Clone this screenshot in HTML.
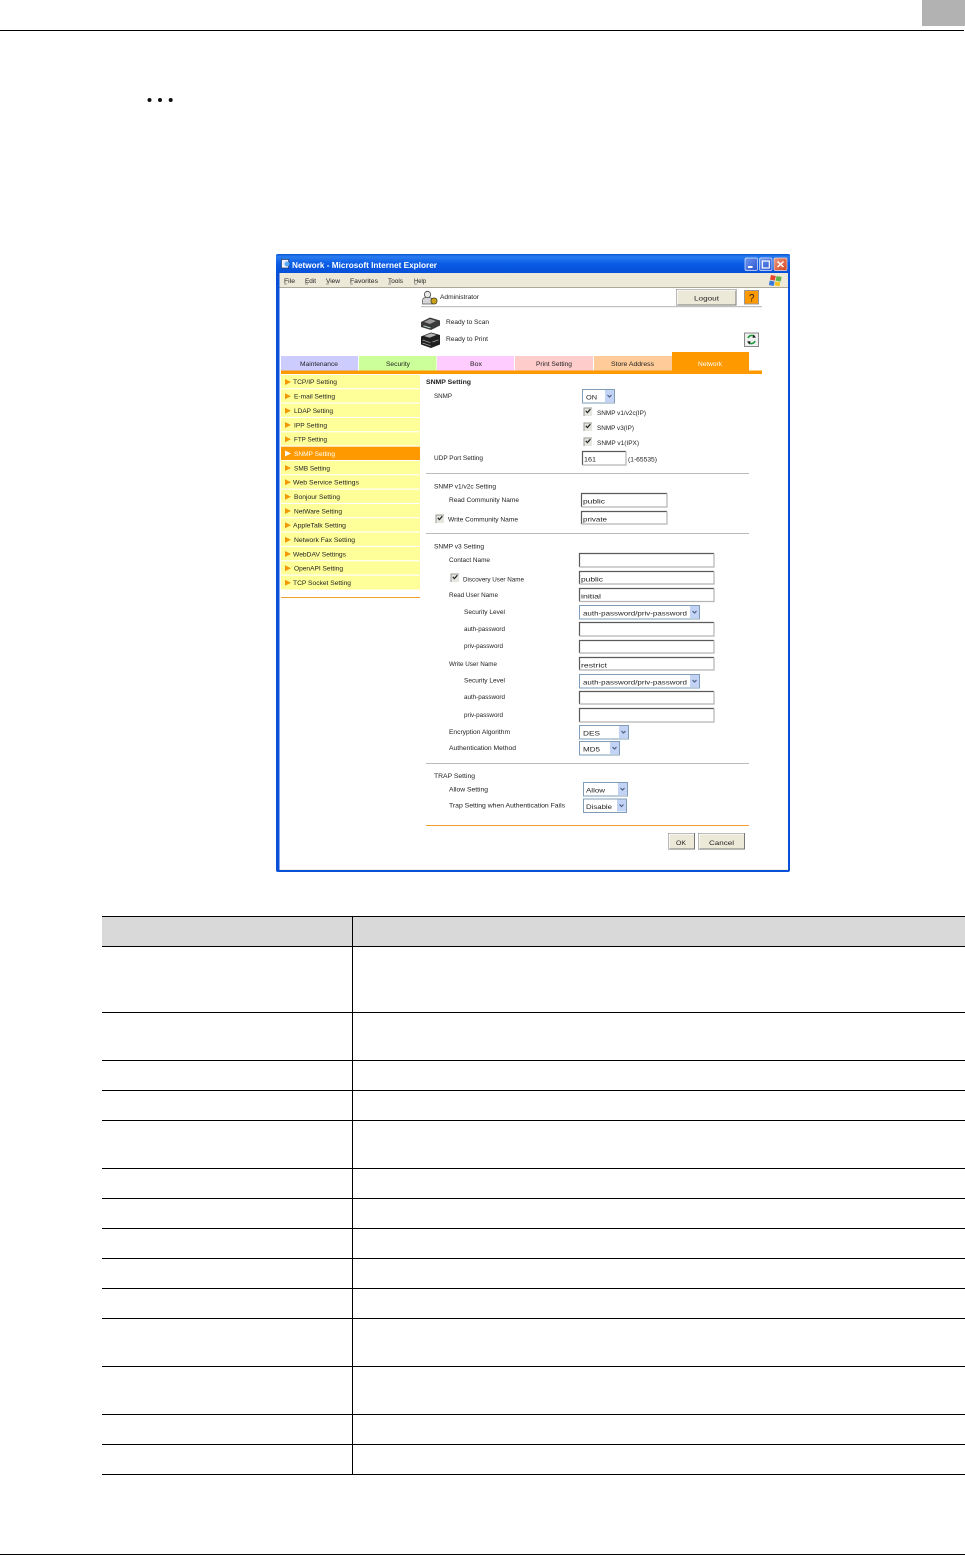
<!DOCTYPE html>
<html><head><meta charset="utf-8"><title>SNMP Setting</title>
<style>
html,body{margin:0;padding:0;background:#fff}
svg{display:block;position:absolute;left:0;top:0}
text{font-family:"Liberation Sans",sans-serif;font-size:6.2px;fill:#222}
.t{filter:blur(.28px)}
.m{font-size:8px;fill:#333}
.f{font-size:9px;fill:#333}
.w{fill:#fff}
.i{fill:none;stroke:#5a5a5a;stroke-width:1.2}
.j{fill:none;stroke:#b5b5b5;stroke-width:1.2}
</style></head><body>
<svg width="965" height="1555" viewBox="0 0 965 1555" xmlns="http://www.w3.org/2000/svg">
<defs>
<linearGradient id="tb" x1="0" y1="0" x2="0" y2="1"><stop offset="0" stop-color="#0a58d8"/><stop offset=".15" stop-color="#2a7cf0"/><stop offset=".5" stop-color="#0a5ce6"/><stop offset="1" stop-color="#0650d8"/></linearGradient>
<linearGradient id="bb" x1="0" y1="0" x2="1" y2="1"><stop offset="0" stop-color="#6f96ee"/><stop offset="1" stop-color="#2a55d0"/></linearGradient>
<linearGradient id="rb" x1="0" y1="0" x2="1" y2="1"><stop offset="0" stop-color="#ec9a80"/><stop offset="1" stop-color="#d5431f"/></linearGradient>
<g id="ar"><rect width="9" height="12" fill="#c3d3f5"/><path d="M2.500 5l2 2 2-2" fill="none" stroke="#4d6185" stroke-width="1.200"/></g>
<g id="ck"><rect width="8" height="8" fill="#e6e6e0"/><path d="M0 8V0H8" fill="none" stroke="#9a9a94" stroke-width="1"/><path d="M1.800 2.800l1.600 1.800 3-3.400" fill="none" stroke="#222" stroke-width="1.200"/></g>
<path id="tri" d="M0 0l6 3-6 3z" fill="#f29a05"/>
</defs>

<!-- page chrome -->
<rect x="922" y="0" width="43" height="26" fill="#b2b2b2"/>
<rect x="0" y="30" width="964" height="1" fill="#000"/>
<circle cx="149.500" cy="100" r="2" fill="#111"/><circle cx="160" cy="100" r="2" fill="#111"/><circle cx="170.700" cy="100" r="2" fill="#111"/>
<rect x="0" y="1554" width="965" height="1" fill="#000"/>

<!-- window -->
<rect x="276" y="254" width="514" height="618" rx="2" fill="#0a4fd8"/>
<rect x="276" y="254" width="514" height="19" rx="2" fill="url(#tb)"/>
<rect x="279.500" y="273" width="508.500" height="597" fill="#fff"/>
<rect x="279.500" y="273" width="508.500" height="14" fill="#ece9d8"/>
<rect x="279.500" y="287" width="508.500" height="1" fill="#aca899"/>
<rect x="279.500" y="869" width="508.500" height="1" fill="#f1efe2"/>
<!-- title buttons -->
<rect x="745" y="258" width="12.500" height="12.500" rx="1.500" fill="url(#bb)" stroke="#dfe8fb" stroke-width=".7"/>
<rect x="748" y="266" width="4.500" height="2" fill="#fff"/>
<rect x="759.500" y="258" width="12.500" height="12.500" rx="1.500" fill="url(#bb)" stroke="#dfe8fb" stroke-width=".7"/>
<rect x="762.300" y="261" width="7" height="7" fill="none" stroke="#fff" stroke-width="1.200"/>
<rect x="774" y="258" width="13" height="12.500" rx="1.500" fill="url(#rb)" stroke="#f4dcd4" stroke-width=".7"/>
<path d="M777.500 261.500l6 5.500m0-5.500l-6 5.500" stroke="#fff" stroke-width="1.500"/>
<!-- IE icon -->
<rect x="281.500" y="259.500" width="7" height="8.500" fill="#eef" stroke="#234" stroke-width=".6"/>
<circle cx="287" cy="264" r="2.500" fill="#5fa9f0"/>
<!-- XP flag -->
<path d="M771 275l4.800 1-1 4.600-4.800-1z" fill="#e8452a"/><path d="M776.600 276l5 1-1 4.600-5-1z" fill="#5db44a"/>
<path d="M769.800 280.500l4.800 1-1 4.500-4.800-1z" fill="#3b78dc"/><path d="M775.400 281.500l5 1-1 3.800-4.900-.8z" fill="#f5c31c"/>

<!-- tabs -->
<rect x="281" y="356" width="77" height="14.500" fill="#ccccff"/>
<rect x="359" y="356" width="77.500" height="14.500" fill="#ccff99"/>
<rect x="437" y="356" width="77" height="14.500" fill="#ffccff"/>
<rect x="515" y="356" width="78" height="14.500" fill="#ffcccc"/>
<rect x="594" y="356" width="78" height="14.500" fill="#ffcc99"/>
<rect x="672" y="352" width="77" height="19" fill="#ff9900"/>
<rect x="281" y="370.500" width="481" height="3.500" fill="#ff9900"/>

<!-- admin rule & buttons -->
<rect x="421" y="306" width="341" height="1.200" fill="#c0c0c0"/>
<rect x="676.500" y="289.500" width="59.500" height="15.500" fill="#ece9d8" stroke="#777" stroke-width="1"/>
<path d="M677 305V290H736" fill="none" stroke="#fff" stroke-width="1"/>
<rect x="744.500" y="290.500" width="14" height="13.500" fill="#ff9900" stroke="#999" stroke-width="1"/>
<rect x="744.500" y="333" width="14" height="13.500" fill="#f0f0f0" stroke="#888" stroke-width="1"/>
<path d="M748 338a4 4 0 0 1 6.500-1.500" fill="none" stroke="#1f9a3c" stroke-width="1.600"/><path d="M755 341a4 4 0 0 1-6.500 1.500" fill="none" stroke="#1f9a3c" stroke-width="1.600"/>
<path d="M753.500 334.500l2.500 3-3.500.4zM749.500 344.500l-2.500-3 3.500-.4z" fill="#222"/>

<!-- admin icon -->
<circle cx="427.500" cy="294.500" r="3.200" fill="#e8e8e8" stroke="#444" stroke-width=".8"/>
<path d="M422.500 304v-3.500q0-2.500 3-3h4q3 .5 3 3.500v3z" fill="#d5d5d5" stroke="#555" stroke-width=".7"/>
<rect x="431" y="298" width="6" height="6" rx="2.500" fill="#caa21a" stroke="#332" stroke-width=".7"/>
<!-- scanner icon -->
<path d="M421 322l9-4.500 10 3v5l-9 4.500-10-3z" fill="#3a3a3a"/>
<path d="M424 322l6-3 6 2-6 3z" fill="#9a9a9a"/>
<path d="M423 326l7 2.200 1-.5-7-2.200z" fill="#dfe"/>
<!-- printer icon -->
<path d="M421 336.500l10-4 9 2.500v9.500l-9 3.500-10-3.500z" fill="#1f1f1f"/>
<path d="M424 336l7-2.700 5.500 1.700-7 2.800z" fill="#b5b5b5"/>
<path d="M422.500 340l8 2.700M422.500 343l8 2.700M432.500 342l6-2.200" stroke="#aaa" stroke-width=".7"/>

<!-- sidebar -->
<g fill="#ffff99">
<rect x="281" y="375" width="139" height="13.200"/><rect x="281" y="389.300" width="139" height="13.200"/><rect x="281" y="403.700" width="139" height="13.200"/><rect x="281" y="418" width="139" height="13.200"/><rect x="281" y="432.300" width="139" height="13.200"/>
<rect x="281" y="461" width="139" height="13.200"/><rect x="281" y="475.300" width="139" height="13.200"/><rect x="281" y="489.700" width="139" height="13.200"/><rect x="281" y="504" width="139" height="13.200"/><rect x="281" y="518.300" width="139" height="13.200"/><rect x="281" y="532.700" width="139" height="13.200"/><rect x="281" y="547" width="139" height="13.200"/><rect x="281" y="561.300" width="139" height="13.200"/><rect x="281" y="575.700" width="139" height="13.800"/>
</g>
<rect x="281" y="446.700" width="139" height="13.300" fill="#ff9900"/>
<rect x="281" y="597" width="139" height="1" fill="#f0a030"/>
<use href="#tri" x="285" y="379"/><use href="#tri" x="285" y="393.300"/><use href="#tri" x="285" y="407.700"/><use href="#tri" x="285" y="422"/><use href="#tri" x="285" y="436.300"/>
<path d="M285 450.500l6 3-6 3z" fill="#fff"/>
<use href="#tri" x="285" y="465"/><use href="#tri" x="285" y="479.300"/><use href="#tri" x="285" y="493.700"/><use href="#tri" x="285" y="508"/><use href="#tri" x="285" y="522.300"/><use href="#tri" x="285" y="536.700"/><use href="#tri" x="285" y="551"/><use href="#tri" x="285" y="565.300"/><use href="#tri" x="285" y="579.700"/>

<!-- separators -->
<rect x="426" y="473" width="323" height="1" fill="#bbb"/>
<rect x="426" y="533" width="323" height="1" fill="#bbb"/>
<rect x="426" y="763" width="323" height="1" fill="#bbb"/>
<rect x="426" y="825" width="323" height="1" fill="#f0a030"/>

<!-- selects -->
<g fill="#fff" stroke="#7f9db9" stroke-width="1">
<rect x="582.500" y="389.500" width="32" height="13.500"/>
<rect x="579.500" y="605.500" width="120" height="13.500"/>
<rect x="579.500" y="674.500" width="120" height="13.500"/>
<rect x="579.500" y="725.500" width="49" height="13.500"/>
<rect x="579.500" y="741.500" width="40" height="13.500"/>
<rect x="583.500" y="782.500" width="44" height="13.500"/>
<rect x="583.500" y="799" width="43" height="13.500"/>
</g>
<use href="#ar" x="605" y="390"/><use href="#ar" x="690" y="606"/><use href="#ar" x="690" y="675"/><use href="#ar" x="619" y="726"/><use href="#ar" x="610" y="742"/><use href="#ar" x="618" y="783"/><use href="#ar" x="617" y="799.500"/>

<!-- inputs -->
<path class="i" d="M582.500 465V451.500H626"/><path class="j" d="M626 451.500V465H582.500"/>
<path class="i" d="M581.500 507V493.500H667"/><path class="j" d="M667 493.500V507H581.500"/>
<path class="i" d="M581.500 524V511.500H667"/><path class="j" d="M667 511.500V524H581.500"/>
<path class="i" d="M579.500 567V553.500H714"/><path class="j" d="M714 553.500V567H579.500"/>
<path class="i" d="M579.500 584V571.500H714"/><path class="j" d="M714 571.500V584H579.500"/>
<path class="i" d="M579.500 601.500V588.500H714"/><path class="j" d="M714 588.500V601.500H579.500"/>
<path class="i" d="M579.500 636V622.500H714"/><path class="j" d="M714 622.500V636H579.500"/>
<path class="i" d="M579.500 653V640.500H714"/><path class="j" d="M714 640.500V653H579.500"/>
<path class="i" d="M579.500 670V657.500H714"/><path class="j" d="M714 657.500V670H579.500"/>
<path class="i" d="M579.500 704V691.500H714"/><path class="j" d="M714 691.500V704H579.500"/>
<path class="i" d="M579.500 722V708.500H714"/><path class="j" d="M714 708.500V722H579.500"/>

<!-- checkboxes -->
<use href="#ck" x="584" y="408"/><use href="#ck" x="584" y="423"/><use href="#ck" x="584" y="438"/>
<use href="#ck" x="436" y="515"/><use href="#ck" x="451" y="574"/>

<!-- OK / Cancel -->
<rect x="668.500" y="833.500" width="26" height="15.500" fill="#ece9d8" stroke="#777" stroke-width="1"/>
<path d="M669 849V834H694" fill="none" stroke="#fff"/>
<rect x="698.500" y="833.500" width="46" height="15.500" fill="#ece9d8" stroke="#777" stroke-width="1"/>
<path d="M699 849V834H744" fill="none" stroke="#fff"/>

<!-- all screenshot text -->
<g class="t">
<text class="w" x="292" y="268" textLength="145" lengthAdjust="spacingAndGlyphs" style="font-size:8px;font-weight:bold">Network - Microsoft Internet Explorer</text>
<g class="m">
<text x="284" y="283" textLength="11" lengthAdjust="spacingAndGlyphs">File</text>
<text x="305" y="283" textLength="11" lengthAdjust="spacingAndGlyphs">Edit</text>
<text x="326" y="283" textLength="14" lengthAdjust="spacingAndGlyphs">View</text>
<text x="350" y="283" textLength="28" lengthAdjust="spacingAndGlyphs">Favorites</text>
<text x="388" y="283" textLength="15" lengthAdjust="spacingAndGlyphs">Tools</text>
<text x="414" y="283" textLength="12" lengthAdjust="spacingAndGlyphs">Help</text>
</g>
<path d="M284 284h3M305 284h3M326 284h3M350 284h3M388 284h3M414 284h3" stroke="#444" stroke-width=".5"/>
<text x="440" y="299" textLength="39" lengthAdjust="spacingAndGlyphs">Administrator</text>
<text x="446" y="324" textLength="43" lengthAdjust="spacingAndGlyphs">Ready to Scan</text>
<text x="446" y="341" textLength="42" lengthAdjust="spacingAndGlyphs">Ready to Print</text>
<text x="300" y="366" textLength="38" lengthAdjust="spacingAndGlyphs">Maintenance</text>
<text x="386" y="366" textLength="24" lengthAdjust="spacingAndGlyphs">Security</text>
<text x="470" y="366" textLength="12" lengthAdjust="spacingAndGlyphs">Box</text>
<text x="536" y="366" textLength="36" lengthAdjust="spacingAndGlyphs">Print Setting</text>
<text x="611" y="366" textLength="43" lengthAdjust="spacingAndGlyphs">Store Address</text>
<text class="w" x="698" y="366" textLength="24" lengthAdjust="spacingAndGlyphs">Network</text>

<text x="293" y="384" textLength="44" lengthAdjust="spacingAndGlyphs">TCP/IP Setting</text>
<text x="294" y="398.500" textLength="41" lengthAdjust="spacingAndGlyphs">E-mail Setting</text>
<text x="294" y="413" textLength="39" lengthAdjust="spacingAndGlyphs">LDAP Setting</text>
<text x="294" y="427.300" textLength="33" lengthAdjust="spacingAndGlyphs">IPP Setting</text>
<text x="294" y="441.700" textLength="33" lengthAdjust="spacingAndGlyphs">FTP Setting</text>
<text class="w" x="294" y="456" textLength="41" lengthAdjust="spacingAndGlyphs">SNMP Setting</text>
<text x="294" y="470.300" textLength="36" lengthAdjust="spacingAndGlyphs">SMB Setting</text>
<text x="293" y="484.700" textLength="66" lengthAdjust="spacingAndGlyphs">Web Service Settings</text>
<text x="294" y="499" textLength="46" lengthAdjust="spacingAndGlyphs">Bonjour Setting</text>
<text x="294" y="513.300" textLength="48" lengthAdjust="spacingAndGlyphs">NetWare Setting</text>
<text x="293" y="527.700" textLength="53" lengthAdjust="spacingAndGlyphs">AppleTalk Setting</text>
<text x="294" y="542" textLength="61" lengthAdjust="spacingAndGlyphs">Network Fax Setting</text>
<text x="293" y="556.300" textLength="53" lengthAdjust="spacingAndGlyphs">WebDAV Settings</text>
<text x="294" y="570.700" textLength="49" lengthAdjust="spacingAndGlyphs">OpenAPI Setting</text>
<text x="293" y="585" textLength="58" lengthAdjust="spacingAndGlyphs">TCP Socket Setting</text>

<text x="426" y="384" textLength="45" lengthAdjust="spacingAndGlyphs" style="font-weight:bold">SNMP Setting</text>
<text x="434" y="398" textLength="18" lengthAdjust="spacingAndGlyphs">SNMP</text>
<text x="597" y="415" textLength="49" lengthAdjust="spacingAndGlyphs">SNMP v1/v2c(IP)</text>
<text x="597" y="430" textLength="37" lengthAdjust="spacingAndGlyphs">SNMP v3(IP)</text>
<text x="597" y="445" textLength="42" lengthAdjust="spacingAndGlyphs">SNMP v1(IPX)</text>
<text x="434" y="460" textLength="49" lengthAdjust="spacingAndGlyphs">UDP Port Setting</text>
<text x="628" y="461.500" textLength="29" lengthAdjust="spacingAndGlyphs">(1-65535)</text>
<text x="434" y="488.500" textLength="62" lengthAdjust="spacingAndGlyphs">SNMP v1/v2c Setting</text>
<text x="449" y="502" textLength="70" lengthAdjust="spacingAndGlyphs">Read Community Name</text>
<text x="448" y="521.500" textLength="70" lengthAdjust="spacingAndGlyphs">Write Community Name</text>
<text x="434" y="548.500" textLength="50" lengthAdjust="spacingAndGlyphs">SNMP v3 Setting</text>
<text x="449" y="562" textLength="41" lengthAdjust="spacingAndGlyphs">Contact Name</text>
<text x="463" y="581.500" textLength="61" lengthAdjust="spacingAndGlyphs">Discovery User Name</text>
<text x="449" y="597" textLength="49" lengthAdjust="spacingAndGlyphs">Read User Name</text>
<text x="464" y="614" textLength="41" lengthAdjust="spacingAndGlyphs">Security Level</text>
<text x="464" y="631" textLength="41" lengthAdjust="spacingAndGlyphs">auth-password</text>
<text x="464" y="648" textLength="39" lengthAdjust="spacingAndGlyphs">priv-password</text>
<text x="449" y="666" textLength="48" lengthAdjust="spacingAndGlyphs">Write User Name</text>
<text x="464" y="682.500" textLength="41" lengthAdjust="spacingAndGlyphs">Security Level</text>
<text x="464" y="699" textLength="41" lengthAdjust="spacingAndGlyphs">auth-password</text>
<text x="464" y="717" textLength="39" lengthAdjust="spacingAndGlyphs">priv-password</text>
<text x="449" y="734" textLength="61" lengthAdjust="spacingAndGlyphs">Encryption Algorithm</text>
<text x="449" y="750" textLength="67" lengthAdjust="spacingAndGlyphs">Authentication Method</text>
<text x="434" y="778" textLength="41" lengthAdjust="spacingAndGlyphs">TRAP Setting</text>
<text x="449" y="791.500" textLength="39" lengthAdjust="spacingAndGlyphs">Allow Setting</text>
<text x="449" y="807.500" textLength="116" lengthAdjust="spacingAndGlyphs">Trap Setting when Authentication Fails</text>

<g class="f">
<text x="694" y="300.500" textLength="25" lengthAdjust="spacingAndGlyphs">Logout</text>
<text x="749" y="301.500" textLength="5.500" lengthAdjust="spacingAndGlyphs" style="font-size:11px">?</text>
<text x="586" y="399.500" textLength="11" lengthAdjust="spacingAndGlyphs">ON</text>
<text x="584" y="461.500" textLength="12" lengthAdjust="spacingAndGlyphs">161</text>
<text x="583" y="503.500" textLength="22" lengthAdjust="spacingAndGlyphs">public</text>
<text x="583" y="521.500" textLength="24" lengthAdjust="spacingAndGlyphs">private</text>
<text x="581" y="581.500" textLength="22" lengthAdjust="spacingAndGlyphs">public</text>
<text x="581" y="598.500" textLength="20" lengthAdjust="spacingAndGlyphs">initial</text>
<text x="583" y="615.500" textLength="104" lengthAdjust="spacingAndGlyphs">auth-password/priv-password</text>
<text x="581" y="667.500" textLength="26" lengthAdjust="spacingAndGlyphs">restrict</text>
<text x="583" y="684.500" textLength="104" lengthAdjust="spacingAndGlyphs">auth-password/priv-password</text>
<text x="583" y="735.500" textLength="17" lengthAdjust="spacingAndGlyphs">DES</text>
<text x="583" y="751.500" textLength="17" lengthAdjust="spacingAndGlyphs">MD5</text>
<text x="586" y="792.500" textLength="19" lengthAdjust="spacingAndGlyphs">Allow</text>
<text x="586" y="809" textLength="26" lengthAdjust="spacingAndGlyphs">Disable</text>
<text x="676" y="845" textLength="10" lengthAdjust="spacingAndGlyphs">OK</text>
<text x="709" y="845" textLength="25" lengthAdjust="spacingAndGlyphs">Cancel</text>
</g>
</g>

<!-- table -->
<rect x="102" y="916" width="863" height="30" fill="#d9d9d9"/>
<g fill="#000">
<rect x="102" y="916" width="863" height="1"/><rect x="102" y="946" width="863" height="1"/><rect x="102" y="1012" width="863" height="1"/><rect x="102" y="1060" width="863" height="1"/><rect x="102" y="1090" width="863" height="1"/><rect x="102" y="1120" width="863" height="1"/><rect x="102" y="1168" width="863" height="1"/><rect x="102" y="1198" width="863" height="1"/><rect x="102" y="1228" width="863" height="1"/><rect x="102" y="1258" width="863" height="1"/><rect x="102" y="1288" width="863" height="1"/><rect x="102" y="1318" width="863" height="1"/><rect x="102" y="1366" width="863" height="1"/><rect x="102" y="1414" width="863" height="1"/><rect x="102" y="1444" width="863" height="1"/><rect x="102" y="1474" width="863" height="1"/>
<rect x="352" y="916" width="1" height="559"/>
</g>
</svg>
</body></html>
